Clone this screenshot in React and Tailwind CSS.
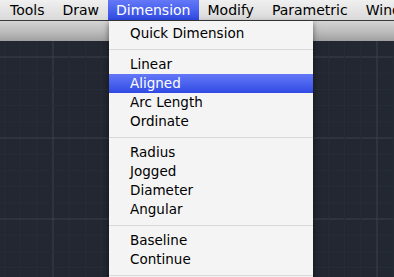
import React from "react";

const menuBar = ["Tools", "Draw", "Dimension", "Modify", "Parametric", "Window"];

const groups = [
  ["Quick Dimension"],
  ["Linear", "Aligned", "Arc Length", "Ordinate"],
  ["Radius", "Jogged", "Diameter", "Angular"],
  ["Baseline", "Continue"],
];

function Grid() {
  const lines = [];
  for (let i = -10; i < 30; i++) {
    const x = 53 + i * 16.2;
    if (x >= 0 && x <= 394) {
      const major = i % 5 === 0;
      lines.push(
        <line key={"v" + i} x1={x} y1={0} x2={x} y2={300} stroke={major ? "#3a414c" : "#282d37"} strokeWidth="1" />
      );
    }
    const y = 57 - 41 + i * 16.2;
    if (y >= 0 && y <= 260) {
      const major = i % 5 === 0;
      lines.push(
        <line key={"h" + i} x1={0} y1={y} x2={394} y2={y} stroke={major ? "#3a414c" : "#282d37"} strokeWidth="1" />
      );
    }
  }
  return (
    <svg width="394" height="240" className="block">
      <rect width="394" height="240" fill="#222731" />
      {lines}
    </svg>
  );
}

export default function App() {
  return (
    <div
      className="relative w-[394px] h-[277px] overflow-hidden bg-[#222731]"
      style={{ fontFamily: '"DejaVu Sans", "Liberation Sans", sans-serif' }}
    >
      <div className="flex h-[20px] pl-px overflow-hidden bg-gradient-to-b from-[#f0f0f0] to-[#d9d9d9] text-[14px] leading-[20px] text-black whitespace-nowrap">
        {menuBar.map((m) => (
          <div
            key={m}
            className={
              m === "Dimension"
                ? "px-[8px] bg-gradient-to-b from-[#6478f7] to-[#3149e4] text-white"
                : "px-[9px]"
            }
          >
            {m}
          </div>
        ))}
      </div>
      <div className="h-px bg-[#3a3a3a]" />
      <div className="h-[20px] bg-gradient-to-b from-[#d4d4d4] via-[#bebebe] to-[#a0a0a0]" />
      <Grid />

      <div className="absolute left-[109px] top-[21px] w-[204px] bg-[#f4f4f4] pt-[3px] shadow-[0_2px_6px_rgba(0,0,0,0.5)] text-[13.5px] text-black">
        {groups.map((g, gi) => (
          <div key={gi}>
            {gi > 0 && (
              <div className="h-[12px] flex flex-col justify-center">
                <div className="h-px bg-[#d9d9d9]" />
              </div>
            )}
            {g.map((item) => (
              <div
                key={item}
                className={
                  item === "Aligned"
                    ? "h-[19px] leading-[19px] pl-[21px] bg-gradient-to-b from-[#6478f7] to-[#3149e4] text-white"
                    : "h-[19px] leading-[19px] pl-[21px]"
                }
              >
                {item}
              </div>
            ))}
          </div>
        ))}
        <div className="h-[12px] flex flex-col justify-center">
          <div className="h-px bg-[#d9d9d9]" />
        </div>
      </div>
    </div>
  );
}
